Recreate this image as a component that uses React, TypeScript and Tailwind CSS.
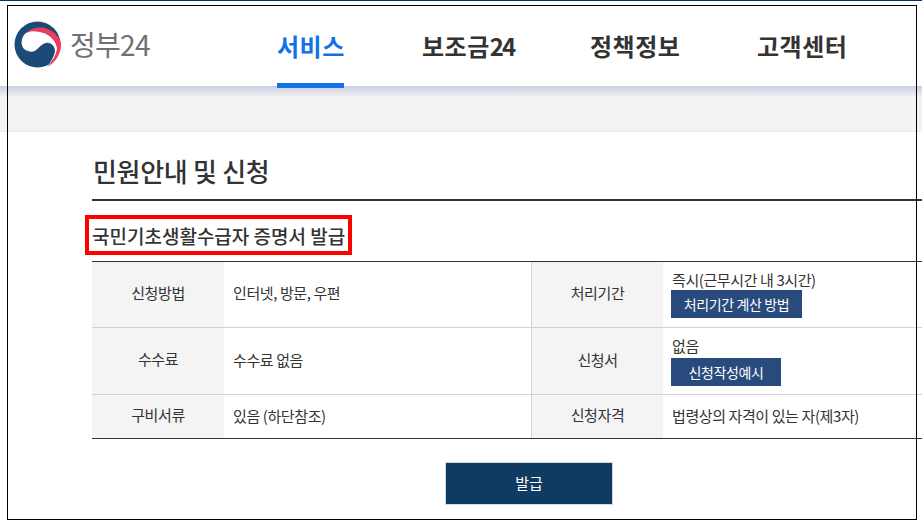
import React from 'react'

const font = { fontFamily: '"Noto Sans CJK KR", "Noto Sans", sans-serif' }

const Logo = () => (
  <svg width="48" height="48" viewBox="0 0 48 48" className="mt-[2px] shrink-0">
    <circle cx="23.5" cy="23.5" r="23" fill="#1a4a75" />
    <path d="M12 12 C17 7 24 5 31 7 C40 10 47 16 47 24 C47 33 41 42 33 46 C38 41 43 33 43 27 C42 19 34 12 26 11 C21 10 16 10 12 12 Z" fill="#ee3a5c" />
    <path d="M7.5 22 C8 17 9 14 12 12 C16 10 21 10 26 11 C34 12 42 19 43 27 C43 33 38 41 33 46 C37 41 41 34 41 29 C40 24 36 21 32 22 C27 23 25 27 22 29 C20 31 17 31 14 30 C10 29 8 26 7.5 22 Z" fill="#ffffff" />
  </svg>
)

const NavItem = ({ children, active, className }: { children: React.ReactNode; active?: boolean; className: string }) => (
  <a className={`relative flex h-[87px] items-center pt-[3px] text-[24px] font-bold tracking-[0.5px] whitespace-nowrap ${active ? 'text-[#1271e6]' : 'text-[#333333]'} ${className}`}>
    {children}
    {active && <span className="absolute bottom-0 left-0 h-[5px] w-full bg-[#1271e6]" />}
  </a>
)

const Label = ({ children, className = 'pb-[4px]' }: { children: React.ReactNode; className?: string }) => (
  <div className={`flex items-center justify-center bg-[#f4f4f4] text-[#333333] ${className}`}>{children}</div>
)

const Value = ({ children, className = 'pb-[2px]' }: { children: React.ReactNode; className?: string }) => (
  <div className={`flex flex-col items-start justify-center pl-[9px] text-[#333333] ${className}`}>{children}</div>
)

const Btn = ({ label, className }: { label: string; className: string }) => (
  <a className={`-ml-px flex h-[28px] items-center justify-center bg-[#284a7c] text-[14px] text-white ${className}`}>{label}</a>
)

export default function App() {
  return (
    <div className="relative h-[528px] w-[922px] overflow-hidden bg-white" style={font}>
      <div className="h-px bg-[#0b2f66]" />
      <header className="flex h-[85px] items-start bg-white">
        <div className="flex h-[85px] w-[277px] items-center pl-[14px]">
          <Logo />
          <span className="ml-[8px] text-[28px] leading-none tracking-[-0.7px] text-[#707070]">정부24</span>
        </div>
        <nav className="flex">
          <NavItem active className="w-[67px]">서비스</NavItem>
          <NavItem className="ml-[78px] w-[92px]">보조금<span className="tracking-[-2px]">24</span></NavItem>
          <NavItem className="ml-[76px] w-[90px]">정책정보</NavItem>
          <NavItem className="ml-[77px] w-[90px]">고객센터</NavItem>
        </nav>
      </header>
      <div className="h-[46px] border-b border-[#ebebeb] bg-gradient-to-b from-[#c9cfe0] via-[#f4f3f4] via-25% to-[#f4f3f4]" />

      <main className="pl-[92px]">
        <h1 className="mt-[20px] h-[49px] border-b-2 border-[#333333] pl-px text-[26px] leading-[38px] font-medium tracking-[-0.3px] text-[#333333]">
          민원안내 및 신청
        </h1>
        <div className="relative mt-[14px] h-[39px]">
          <h2 className="text-[19px] leading-[41px] font-medium text-[#333333]">국민기초생활수급자 증명서 발급</h2>
          <span className="absolute top-0 left-[-7px] h-[40px] w-[267px] border-4 border-[#ff0000]" />
        </div>

        <div className="mt-[7px] grid grid-cols-[132px_307px_1px_131px_1fr] grid-rows-[65px_1px_66px_1px_43px] border-t border-b border-t-[#333333] border-b-[#333333] text-[15px] leading-[20px] tracking-[-0.4px]">
          <Label>신청방법</Label>
          <Value className="pb-[4px]">인터넷, 방문, 우편</Value>
          <div className="bg-[#d3d3d3]" />
          <Label>처리기간</Label>
          <Value>
            <span>즉시(근무시간 내 3시간)</span>
            <Btn label="처리기간 계산 방법" className="w-[131px]" />
          </Value>

          <div className="col-span-5 bg-[#d3d3d3]" />

          <Label>수수료</Label>
          <Value>수수료 없음</Value>
          <div className="bg-[#d3d3d3]" />
          <Label className="pb-[2px]">신청서</Label>
          <Value className="pb-0">
            <span>없음</span>
            <Btn label="신청작성예시" className="mt-[2px] w-[110px]" />
          </Value>

          <div className="col-span-5 bg-[#d3d3d3]" />

          <Label>구비서류</Label>
          <Value>있음 (하단참조)</Value>
          <div className="bg-[#d3d3d3]" />
          <Label>신청자격</Label>
          <Value>법령상의 자격이 있는 자(제3자)</Value>
        </div>

        <div className="mt-[23px] pl-[353px]">
          <a className="flex h-[43px] w-[168px] items-center justify-center border border-[#d5dade] bg-[#0f3a62] text-[15px] text-white">발급</a>
        </div>
      </main>

      {/* screenshot annotation frame */}
      <div className="pointer-events-none absolute top-[5px] left-[7px] h-[515px] w-[910px] border border-black" />
    </div>
  )
}
